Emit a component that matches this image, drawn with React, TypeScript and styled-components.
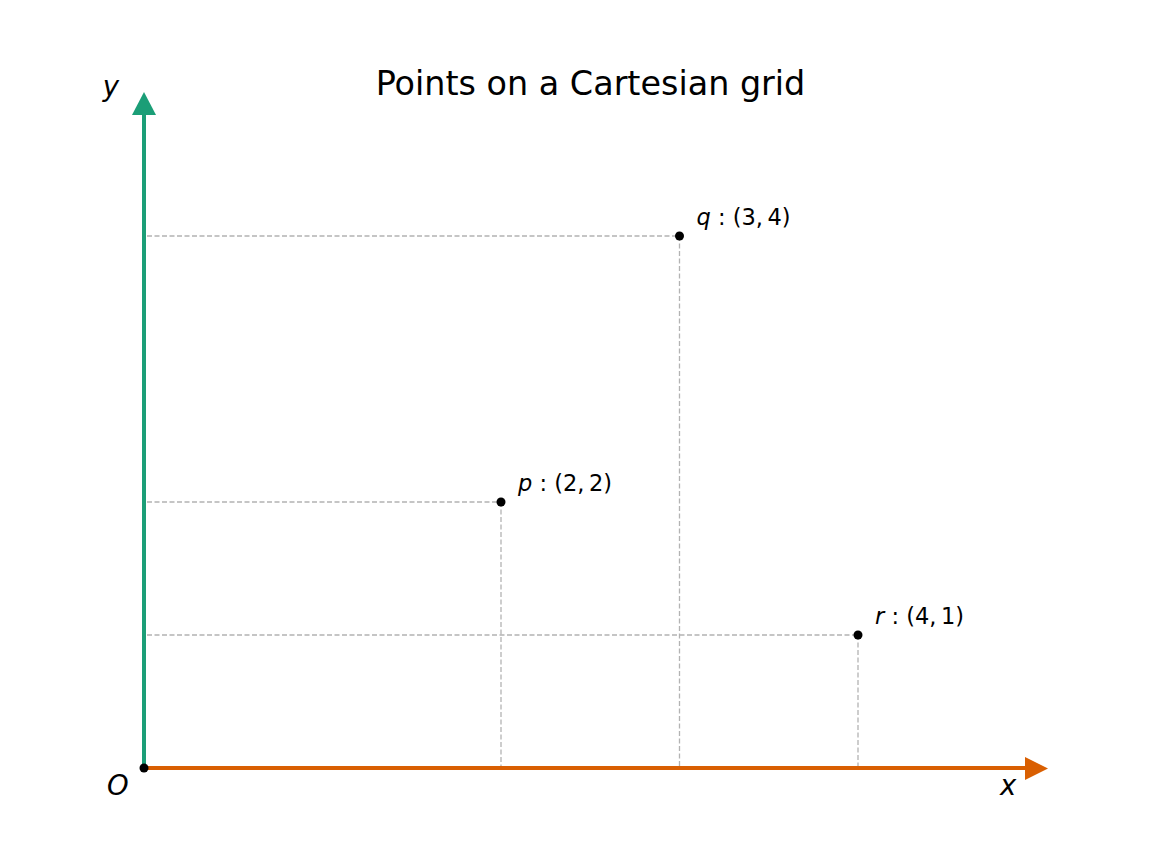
import React from "react";
import styled, { createGlobalStyle } from "styled-components";

const GlobalStyle = createGlobalStyle`
  html, body { margin: 0; padding: 0; background: #ffffff; }
  body { font-family: "DejaVu Sans", "Liberation Sans", sans-serif; }
`;

const Figure = styled.div`
  width: 1152px;
  height: 864px;
  background: #ffffff;
  display: flex;
  flex-direction: column;
  overflow: hidden;
`;

const TitleBar = styled.div`
  height: 104px;
  box-sizing: border-box;
  padding: 65px 115px 0 144px;
  display: flex;
  justify-content: center;
`;

const Title = styled.h1`
  margin: 0;
  font-family: "DejaVu Sans", sans-serif;
  font-weight: normal;
  font-size: 33.4px;
  line-height: 38px;
  color: #000000;
  white-space: nowrap;
`;

const Plot = styled.svg`
  display: block;
  width: 1152px;
  height: 760px;
  overflow: visible;
  font-family: "DejaVu Sans", sans-serif;
`;

const X0 = 144;
const Y0 = 768;
const UX = 178.5;
const UY = 133;

const points = [
  { name: "p", x: 2, y: 2 },
  { name: "q", x: 3, y: 4 },
  { name: "r", x: 4, y: 1 },
];

const GREEN = "#1b9e77";
const ORANGE = "#d95f02";

export default function App() {
  return (
    <>
      <GlobalStyle />
      <Figure>
        <TitleBar>
          <Title>Points on a Cartesian grid</Title>
        </TitleBar>
        <Plot viewBox="0 104 1152 760" xmlns="http://www.w3.org/2000/svg">
          {points.map((p) => {
            const px = X0 + p.x * UX;
            const py = Y0 - p.y * UY;
            return (
              <g key={p.name}>
                <line x1={X0 + 3} y1={py} x2={px} y2={py} stroke="#b3b3b3" strokeWidth={1.3} strokeDasharray="5 2.5" />
                <line x1={px} y1={py} x2={px} y2={Y0 - 2} stroke="#b3b3b3" strokeWidth={1.3} strokeDasharray="5 2.5" />
              </g>
            );
          })}
          <line x1={X0} y1={Y0} x2={X0} y2={112} stroke={GREEN} strokeWidth={4} />
          <polygon points={`${X0},92 132,115 156,115`} fill={GREEN} />
          <line x1={X0} y1={Y0} x2={1027} y2={Y0} stroke={ORANGE} strokeWidth={4} />
          <polygon points={`1048,768.5 1025,757 1025,780`} fill={ORANGE} />
          <circle cx={X0} cy={Y0} r={4.5} fill="#000" />
          {points.map((p) => {
            const px = X0 + p.x * UX;
            const py = Y0 - p.y * UY;
            return (
              <g key={p.name + "d"}>
                <circle cx={px} cy={py} r={4.5} fill="#000" />
                <text x={px + 17} y={py - 11.5} fontSize={22.5} fill="#000">
                  <tspan fontStyle="italic">{p.name}</tspan>
                  <tspan>{" : ("}{p.x},{"\u2009"}{p.y})</tspan>
                </text>
              </g>
            );
          })}
          <text x={111} y={96} fontSize={27.5} fontStyle="italic" textAnchor="middle" fill="#000">y</text>
          <text x={107} y={795} fontSize={27.5} fontStyle="italic" fill="#000">O</text>
          <text x={1000} y={795} fontSize={27.5} fontStyle="italic" fill="#000">x</text>
        </Plot>
      </Figure>
    </>
  );
}
